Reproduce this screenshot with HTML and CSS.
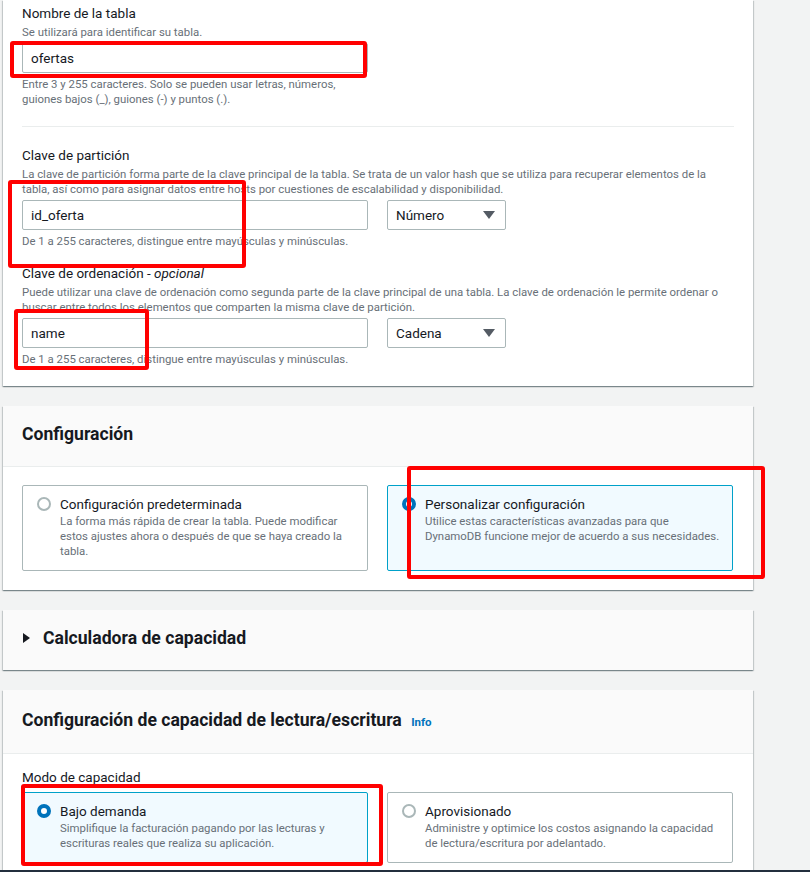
FILE: index.html
```html
<!DOCTYPE html>
<html lang="es">
<head>
<meta charset="utf-8">
<title>Crear tabla</title>
<link rel="stylesheet" href="styles.css">
</head>
<body>
<div class="page">
  <section class="panel panel-top">
    <div class="field">
      <div class="label">Nombre de la tabla</div>
      <div class="desc">Se utilizará para identificar su tabla.</div>
      <div class="input wide">ofertas</div>
      <div class="hint">Entre 3 y 255 caracteres. Solo se pueden usar letras, números,<br>guiones bajos (_), guiones (-) y puntos (.).</div>
    </div>
    <hr class="divider">
    <div class="field">
      <div class="label">Clave de partición</div>
      <div class="desc">La clave de partición forma parte de la clave principal de la tabla. Se trata de un valor hash que se utiliza para recuperar elementos de la tabla, así como para asignar datos entre hosts por cuestiones de escalabilidad y disponibilidad.</div>
      <div class="row">
        <div class="input wide">id_oferta</div>
        <div class="select">Número<span class="caret"></span></div>
      </div>
      <div class="hint">De 1 a 255 caracteres, distingue entre mayúsculas y minúsculas.</div>
    </div>
    <div class="field field-sort">
      <div class="label">Clave de ordenación - <i>opcional</i></div>
      <div class="desc">Puede utilizar una clave de ordenación como segunda parte de la clave principal de una tabla. La clave de ordenación le permite ordenar o buscar entre todos los elementos que comparten la misma clave de partición.</div>
      <div class="row">
        <div class="input wide">name</div>
        <div class="select">Cadena<span class="caret"></span></div>
      </div>
      <div class="hint">De 1 a 255 caracteres, distingue entre mayúsculas y minúsculas.</div>
    </div>
  </section>

  <section class="panel">
    <header class="panel-header"><h2>Configuración</h2></header>
    <div class="panel-body">
      <div class="tiles">
        <div class="tile">
          <span class="radio"></span>
          <div class="tile-text">
            <div class="tile-title">Configuración predeterminada</div>
            <div class="tile-desc">La forma más rápida de crear la tabla. Puede modificar estos ajustes ahora o después de que se haya creado la tabla.</div>
          </div>
        </div>
        <div class="tile selected">
          <span class="radio checked"></span>
          <div class="tile-text">
            <div class="tile-title">Personalizar configuración</div>
            <div class="tile-desc">Utilice estas características avanzadas para que DynamoDB funcione mejor de acuerdo a sus necesidades.</div>
          </div>
        </div>
      </div>
    </div>
  </section>

  <section class="panel panel-collapsed">
    <h2 class="expander"><span class="tri"></span>Calculadora de capacidad</h2>
  </section>

  <section class="panel panel-last">
    <header class="panel-header header-tall"><h2>Configuración de capacidad de lectura/escritura <a class="info">Info</a></h2></header>
    <div class="panel-body body-mode">
      <div class="label">Modo de capacidad</div>
      <div class="tiles tiles-mode">
        <div class="tile selected">
          <span class="radio checked"></span>
          <div class="tile-text">
            <div class="tile-title">Bajo demanda</div>
            <div class="tile-desc">Simplifique la facturación pagando por las lecturas y escrituras reales que realiza su aplicación.</div>
          </div>
        </div>
        <div class="tile">
          <span class="radio"></span>
          <div class="tile-text">
            <div class="tile-title">Aprovisionado</div>
            <div class="tile-desc">Administre y optimice los costos asignando la capacidad de lectura/escritura por adelantado.</div>
          </div>
        </div>
      </div>
    </div>
  </section>
</div>

<div class="mark m1"></div>
<div class="mark m2"></div>
<div class="mark m3"></div>
<div class="mark m4"></div>
<div class="mark m5"></div>
<div class="footer-bar"></div>
</body>
</html>
```
FILE: styles.css
```css
* { box-sizing: border-box; }
html, body { margin: 0; padding: 0; }
body {
  background: #f2f3f3;
  font-family: Roboto, "Liberation Sans", Arial, sans-serif;
  color: #16191f;
  position: relative;
  height: 872px;
  overflow: hidden;
}
.page {
  padding-left: 3px;
  width: 753px;
}
.panel {
  background: #fff;
  box-shadow: 0 1px 1px 0 rgba(0,28,36,.3), 1px 1px 1px 0 rgba(0,28,36,.15), -1px 1px 1px 0 rgba(0,28,36,.15);
  margin-bottom: 20px;
}
.panel-top {
  padding: 2px 19px 19px 19px;
}
.label {
  font-size: 13.5px;
  line-height: 22px;
  color: #16191f;
}
.desc, .hint {
  font-size: 11.4px;
  line-height: 15px;
  color: #687078;
}
.desc { margin-top: 1px; }
.input {
  margin-top: 3px;
  height: 30px;
  border: 1px solid #aab7b8;
  border-radius: 2px;
  font-size: 13.5px;
  line-height: 28px;
  padding-left: 8px;
  background: #fff;
}
.input.wide { width: 346px; }
.row {
  display: flex;
  gap: 19px;
  margin-top: 3px;
}
.row .input { margin-top: 0; }
.select {
  width: 119px;
  height: 30px;
  border: 1px solid #aab7b8;
  border-radius: 2px;
  font-size: 13.5px;
  line-height: 28px;
  padding-left: 8px;
  padding-right: 10px;
  display: flex;
  align-items: center;
  justify-content: space-between;
}
.caret {
  width: 0; height: 0;
  border-left: 6px solid transparent;
  border-right: 6px solid transparent;
  border-top: 8px solid #545b64;
}
.hint { margin-top: 4px; }
.divider {
  border: 0;
  border-top: 1px solid #eaeded;
  margin: 19px 0 17px 0;
}
.field-sort { margin-top: 13px; }

.panel-header {
  background: #fafafa;
  border-bottom: 1px solid #eaeded;
  padding: 17px 19px 21px 19px;
}
h2 {
  margin: 0;
  font-size: 17.6px;
  line-height: 22px;
  font-weight: 700;
  color: #16191f;
}
.header-tall { padding-top: 19px; padding-bottom: 20px; }
.info {
  font-size: 11.5px;
  font-weight: 700;
  color: #0073bb;
  margin-left: 5px;
}
.panel-body {
  padding: 18px 19px 19px 19px;
}
.tiles {
  display: grid;
  grid-template-columns: 346px 346px;
  column-gap: 19px;
}
.tile {
  border: 1px solid #aab7b8;
  border-radius: 2px;
  padding: 8px 12px 11px 14px;
  display: flex;
  gap: 9px;
  align-items: flex-start;
  background: #fff;
}
.tile.selected {
  border-color: #00a1c9;
  background: #f1faff;
}
.radio {
  flex: none;
  width: 14px;
  height: 14px;
  border-radius: 50%;
  border: 2px solid #aab7b8;
  margin-top: 3px;
  background: #fff;
}
.radio.checked {
  border: 4.5px solid #0073bb;
}
.tile-title {
  font-size: 13.5px;
  line-height: 20px;
}
.tile-desc {
  font-size: 11.4px;
  line-height: 15px;
  color: #687078;
}
.panel-collapsed {
  background: #fafafa;
  height: 60px;
  padding: 17px 19px;
}
.expander {
  display: flex;
  align-items: center;
}
.tri {
  width: 0; height: 0;
  border-top: 5px solid transparent;
  border-bottom: 5px solid transparent;
  border-left: 7px solid #16191f;
  margin: 0 13px 0 1px;
}
.panel-last {
  margin-bottom: 0;
  height: 400px;
}
.body-mode { padding-top: 12px; }
.tiles-mode { margin-top: 4px; }

.mark {
  position: absolute;
  border: 4px solid #ff0000;
  border-radius: 3px;
}
.m1 { left: 10px; top: 41px; width: 357px; height: 37px; }
.m2 { left: 8px; top: 180px; width: 238px; height: 88px; }
.m3 { left: 14px; top: 309px; width: 135px; height: 61px; }
.m4 { left: 407px; top: 466px; width: 358px; height: 113px; }
.m5 { left: 21px; top: 784px; width: 362px; height: 82px; }
.footer-bar {
  position: fixed;
  left: 0; right: 0; bottom: 0;
  height: 2px;
  background: #232f3e;
}
```
